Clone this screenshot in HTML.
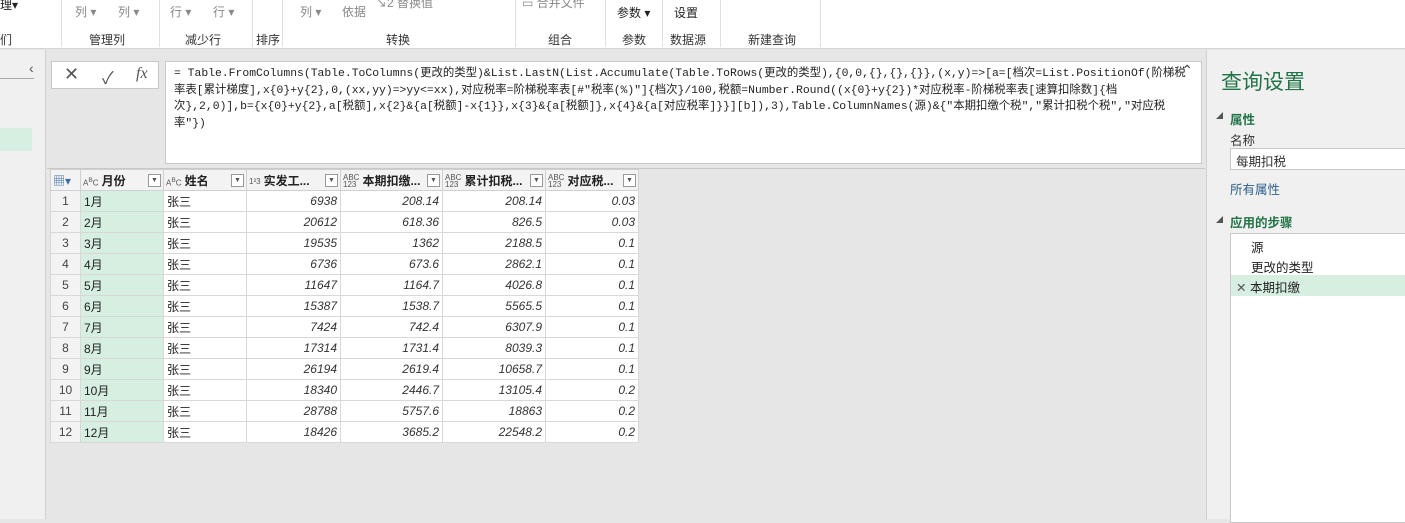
<!DOCTYPE html>
<html><head><meta charset="utf-8"><style>
*{margin:0;padding:0;box-sizing:border-box}
body{width:1405px;height:519px;overflow:hidden;background:#e6e6e6;font-family:"Liberation Sans","Noto Sans CJK SC",sans-serif;font-size:12px;color:#222;position:relative}
.a{position:absolute}
#rib{left:0;top:0;width:1405px;height:49px;background:#fff;border-bottom:1px solid #d4d4d4}
.sep{position:absolute;top:0;width:1px;height:47px;background:#e1e1e1}
.gl{position:absolute;top:31px;font-size:12px;color:#333;white-space:nowrap}
.ti{position:absolute;font-size:12px;color:#888;white-space:nowrap}
#fx{left:51px;top:61px;width:108px;height:28px;background:#fff;border:1px solid #c8c8c8}
#fb{left:165px;top:61px;width:1037px;height:103px;background:#fff;border:1px solid #c8c8c8;font-family:"Liberation Mono","Noto Sans CJK SC",monospace;font-size:11.4px;line-height:16.5px;padding:4px 14px 4px 8px;color:#222}
table{position:absolute;left:50px;top:169px;border-collapse:collapse;background:#fff;font-size:12px}
td{border:1px solid #d8d8d8;height:21px;padding:0 3px;white-space:nowrap}
td.n{text-align:right;font-style:italic;color:#333}
th{border:1px solid #d0d0d0;height:21px;background:#f3f3f3;font-weight:bold;text-align:left;padding:0 2px;white-space:nowrap;font-size:12px}
td.r{background:#f3f3f3;text-align:center;color:#444}
td.m{background:#d6efe1}
.dd{display:inline-block;width:13px;height:13px;border:1px solid #999;background:#fff;float:right;margin-top:2px;font-size:7px;text-align:center;line-height:11px;color:#555;font-weight:normal}
.tp{font-size:8px;font-weight:normal;color:#555;display:inline-block;line-height:7px;vertical-align:middle;margin-right:3px}
</style></head><body>
<div id="rib" class="a">
<div class="ti" style="left:0;top:-4px;color:#222">理▾</div>
<div class="ti" style="left:75px;top:3px">列 ▾</div>
<div class="ti" style="left:118px;top:3px">列 ▾</div>
<div class="ti" style="left:170px;top:3px">行 ▾</div>
<div class="ti" style="left:213px;top:3px">行 ▾</div>
<div class="ti" style="left:300px;top:3px">列 ▾</div>
<div class="ti" style="left:342px;top:3px">依据</div>
<div class="ti" style="left:375px;top:-6px">↘2 替换值</div>
<div class="ti" style="left:522px;top:-6px">▭ 合并文件</div>
<div class="ti" style="left:617px;top:4px;color:#222">参数 ▾</div>
<div class="ti" style="left:674px;top:4px;color:#222">设置</div>
<div class="sep" style="left:61px"></div><div class="sep" style="left:159px"></div><div class="sep" style="left:252px"></div><div class="sep" style="left:282px"></div><div class="sep" style="left:515px"></div><div class="sep" style="left:605px"></div><div class="sep" style="left:662px"></div><div class="sep" style="left:720px"></div><div class="sep" style="left:820px"></div>
<div class="gl" style="left:0">们</div>
<div class="gl" style="left:89px">管理列</div>
<div class="gl" style="left:185px">减少行</div>
<div class="gl" style="left:256px">排序</div>
<div class="gl" style="left:386px">转换</div>
<div class="gl" style="left:548px">组合</div>
<div class="gl" style="left:622px">参数</div>
<div class="gl" style="left:670px">数据源</div>
<div class="gl" style="left:748px">新建查询</div>
</div>
<div class="a" style="left:0;top:50px;width:46px;height:469px;background:#f0f0f0;border-right:1px solid #d0d0d0"></div>
<div class="a" style="left:0;top:78px;width:34px;height:1px;background:#aaa"></div>
<div class="a" style="left:29px;top:60px;font-size:14px;color:#555">‹</div>
<div class="a" style="left:0;top:128px;width:32px;height:23px;background:#d6efe1"></div>
<div id="fx" class="a"><span class="a" style="left:12px;top:2px;font-size:18px;color:#555">✕</span><span class="a" style="left:50px;top:2px;font-size:17px;color:#555">✓</span><span class="a" style="left:84px;top:3px;font-family:'Liberation Serif',serif;font-style:italic;font-size:16px;color:#555">fx</span></div>
<div id="fb" class="a">= Table.FromColumns(Table.ToColumns(更改的类型)&amp;List.LastN(List.Accumulate(Table.ToRows(更改的类型),{0,0,{},{},{}},(x,y)=&gt;[a=[档次=List.PositionOf(阶梯税率表[累计梯度],x{0}+y{2},0,(xx,yy)=&gt;yy&lt;=xx),对应税率=阶梯税率表[#"税率(%)"]{档次}/100,税额=Number.Round((x{0}+y{2})*对应税率-阶梯税率表[速算扣除数]{档次},2,0)],b={x{0}+y{2},a[税额],x{2}&amp;{a[税额]-x{1}},x{3}&amp;{a[税额]},x{4}&amp;{a[对应税率]}}][b]),3),Table.ColumnNames(源)&amp;{"本期扣缴个税","累计扣税个税","对应税率"})<span class="a" style="right:8px;top:2px;font-size:14px;color:#444">⌃</span></div>
<div class="a" style="left:47px;top:168px;width:1158px;height:1px;background:#c8c8c8"></div>
<table>
<tr><th style="width:30px;font-weight:normal;color:#3a6ea5">▦▾</th><th style="width:83px;background:#f3f3f3"><span class="tp">A<sup>B</sup>C</span>月份<span class="dd">▼</span></th><th style="width:83px"><span class="tp">A<sup>B</sup>C</span>姓名<span class="dd">▼</span></th><th style="width:94px"><span class="tp">1²3</span>实发工...<span class="dd">▼</span></th><th style="width:102px"><span class="tp">ABC<br>123</span>本期扣缴...<span class="dd">▼</span></th><th style="width:103px"><span class="tp">ABC<br>123</span>累计扣税...<span class="dd">▼</span></th><th style="width:93px"><span class="tp">ABC<br>123</span>对应税...<span class="dd">▼</span></th></tr>
<tr><td class="r">1</td><td class="m">1月</td><td>张三</td><td class="n">6938</td><td class="n">208.14</td><td class="n">208.14</td><td class="n">0.03</td></tr>
<tr><td class="r">2</td><td class="m">2月</td><td>张三</td><td class="n">20612</td><td class="n">618.36</td><td class="n">826.5</td><td class="n">0.03</td></tr>
<tr><td class="r">3</td><td class="m">3月</td><td>张三</td><td class="n">19535</td><td class="n">1362</td><td class="n">2188.5</td><td class="n">0.1</td></tr>
<tr><td class="r">4</td><td class="m">4月</td><td>张三</td><td class="n">6736</td><td class="n">673.6</td><td class="n">2862.1</td><td class="n">0.1</td></tr>
<tr><td class="r">5</td><td class="m">5月</td><td>张三</td><td class="n">11647</td><td class="n">1164.7</td><td class="n">4026.8</td><td class="n">0.1</td></tr>
<tr><td class="r">6</td><td class="m">6月</td><td>张三</td><td class="n">15387</td><td class="n">1538.7</td><td class="n">5565.5</td><td class="n">0.1</td></tr>
<tr><td class="r">7</td><td class="m">7月</td><td>张三</td><td class="n">7424</td><td class="n">742.4</td><td class="n">6307.9</td><td class="n">0.1</td></tr>
<tr><td class="r">8</td><td class="m">8月</td><td>张三</td><td class="n">17314</td><td class="n">1731.4</td><td class="n">8039.3</td><td class="n">0.1</td></tr>
<tr><td class="r">9</td><td class="m">9月</td><td>张三</td><td class="n">26194</td><td class="n">2619.4</td><td class="n">10658.7</td><td class="n">0.1</td></tr>
<tr><td class="r">10</td><td class="m">10月</td><td>张三</td><td class="n">18340</td><td class="n">2446.7</td><td class="n">13105.4</td><td class="n">0.2</td></tr>
<tr><td class="r">11</td><td class="m">11月</td><td>张三</td><td class="n">28788</td><td class="n">5757.6</td><td class="n">18863</td><td class="n">0.2</td></tr>
<tr><td class="r">12</td><td class="m">12月</td><td>张三</td><td class="n">18426</td><td class="n">3685.2</td><td class="n">22548.2</td><td class="n">0.2</td></tr>
</table>
<div class="a" style="left:1206px;top:50px;width:199px;height:469px;background:#f0f0f0;border-left:1px solid #d0d0d0">
<div class="a" style="left:14px;top:16px;font-size:21px;color:#217346">查询设置</div>
<div class="a" style="left:9px;top:61px;font-size:7px;color:#555">◢</div>
<div class="a" style="left:23px;top:59px;font-weight:bold;color:#217346;font-size:12.5px">属性</div>
<div class="a" style="left:23px;top:80px;color:#333;font-size:12.5px">名称</div>
<div class="a" style="left:23px;top:98px;width:180px;height:22px;background:#fff;border:1px solid #c8c8c8;padding:2px 5px;color:#333;font-size:12.5px">每期扣税</div>
<div class="a" style="left:23px;top:129px;color:#2e5f8a;font-size:12.5px">所有属性</div>
<div class="a" style="left:9px;top:165px;font-size:7px;color:#555">◢</div>
<div class="a" style="left:23px;top:162px;font-weight:bold;color:#217346;font-size:12.5px">应用的步骤</div>
<div class="a" style="left:23px;top:183px;width:180px;height:290px;background:#fff;border:1px solid #c8c8c8">
<div class="a" style="left:20px;top:3px;font-size:12.5px">源</div>
<div class="a" style="left:20px;top:23px;font-size:12.5px">更改的类型</div>
<div class="a" style="left:0;top:41px;width:180px;height:21px;background:#d6efe1"></div>
<div class="a" style="left:5px;top:43px;font-size:12.5px;color:#555">✕ <span style="color:#222">本期扣缴</span></div>
</div>
</div>
</body></html>
